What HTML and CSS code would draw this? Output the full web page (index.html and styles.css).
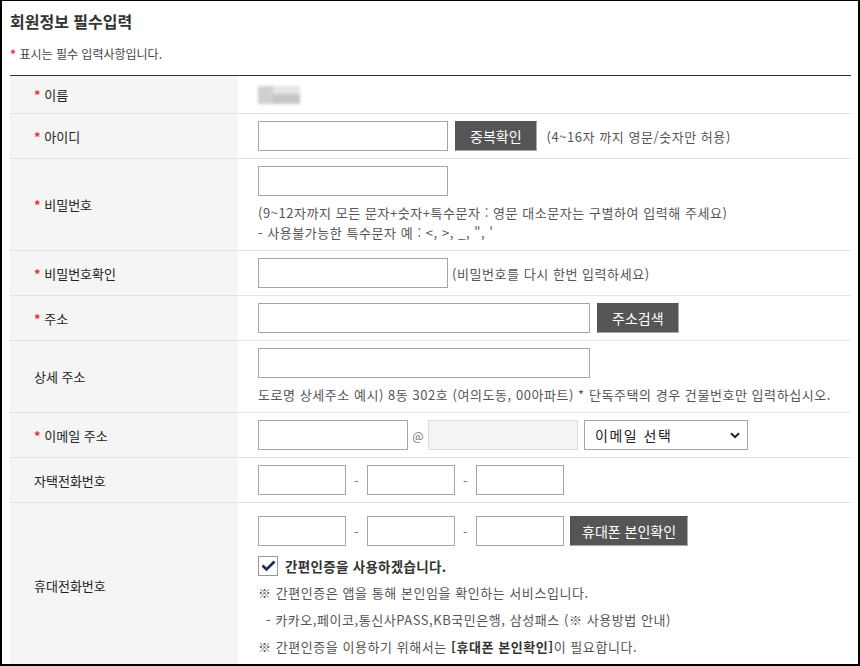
FILE: index.html
```html
<!DOCTYPE html>
<html lang="ko">
<head>
    <meta charset="UTF-8">
    <meta name="viewport" content="width=device-width, initial-scale=1.0">
    <title>회원정보 필수입력</title>
    <link rel="stylesheet" href="styles.css">
</head>
<body>
    <div class="frame">
        <h2 class="titulo">회원정보 필수입력</h2>
        <p class="aviso"><span class="req">*</span> 표시는 필수 입력사항입니다.</p>

        <table class="tabla">
            <tr class="fila-nombre">
                <th><span class="req">*</span> 이름</th>
                <td><span class="nombre-blur"></span></td>
            </tr>
            <tr>
                <th><span class="req">*</span> 아이디</th>
                <td>
                    <div class="linea">
                        <input type="text" class="inp inp-md">
                        <button class="btn">중복확인</button>
                        <span class="ayuda">(4~16자 까지 영문/숫자만 허용)</span>
                    </div>
                </td>
            </tr>
            <tr>
                <th><span class="req">*</span> 비밀번호</th>
                <td>
                    <input type="password" class="inp inp-md">
                    <p class="nota">(9~12자까지 모든 문자+숫자+특수문자 : 영문 대소문자는 구별하여 입력해 주세요)<br>- 사용불가능한 특수문자 예 : &lt;, &gt;, _, ", '</p>
                </td>
            </tr>
            <tr>
                <th><span class="req">*</span> 비밀번호확인</th>
                <td>
                    <div class="linea">
                        <input type="password" class="inp inp-md">
                        <span class="ayuda pegada">(비밀번호를 다시 한번 입력하세요)</span>
                    </div>
                </td>
            </tr>
            <tr>
                <th><span class="req">*</span> 주소</th>
                <td>
                    <div class="linea">
                        <input type="text" class="inp inp-lg">
                        <button class="btn">주소검색</button>
                    </div>
                </td>
            </tr>
            <tr>
                <th>상세 주소</th>
                <td>
                    <input type="text" class="inp inp-lg">
                    <p class="nota">도로명 상세주소 예시) 8동 302호 (여의도동, 00아파트) * 단독주택의 경우 건물번호만 입력하십시오.</p>
                </td>
            </tr>
            <tr>
                <th><span class="req">*</span> 이메일 주소</th>
                <td>
                    <div class="linea linea-mail">
                        <input type="text" class="inp inp-mail">
                        <span class="arroba">@</span>
                        <input type="text" class="inp inp-mail inp-off" disabled>
                        <div class="select-box">
                            <select class="sel">
                                <option>이메일 선택</option>
                                <option>naver.com</option>
                                <option>gmail.com</option>
                            </select>
                            <svg class="chevron" width="10" height="7" viewBox="0 0 10 7"><path d="M1 1.2 L5 5.2 L9 1.2" fill="none" stroke="#222" stroke-width="2"/></svg>
                        </div>
                    </div>
                </td>
            </tr>
            <tr>
                <th>자택전화번호</th>
                <td>
                    <div class="linea">
                        <input type="text" class="inp inp-sm">
                        <span class="guion">-</span>
                        <input type="text" class="inp inp-sm">
                        <span class="guion">-</span>
                        <input type="text" class="inp inp-sm">
                    </div>
                </td>
            </tr>
            <tr class="fila-movil">
                <th>휴대전화번호</th>
                <td>
                    <div class="linea">
                        <input type="text" class="inp inp-sm">
                        <span class="guion">-</span>
                        <input type="text" class="inp inp-sm">
                        <span class="guion">-</span>
                        <input type="text" class="inp inp-sm">
                        <button class="btn btn-movil">휴대폰 본인확인</button>
                    </div>
                    <label class="check">
                        <span class="check-box">
                            <svg width="15" height="12" viewBox="0 0 15 12"><path d="M1.5 5.6 L5.5 9.4 L13.5 1.6" fill="none" stroke="#1d2b5e" stroke-width="2.8"/></svg>
                        </span>
                        간편인증을 사용하겠습니다.
                    </label>
                    <p class="info primera">※ 간편인증은 앱을 통해 본인임을 확인하는 서비스입니다.</p>
                    <p class="info sub">- 카카오,페이코,통신사PASS,KB국민은행, 삼성패스 (※ 사용방법 안내)</p>
                    <p class="info">※ 간편인증을 이용하기 위해서는 <b>[휴대폰 본인확인]</b>이 필요합니다.</p>
                </td>
            </tr>
        </table>
    </div>
</body>
</html>
```

FILE: styles.css
```css
*{
    margin: 0;
    padding: 0;
    box-sizing: border-box;
}
body{
    background-color: #fff;
    font-family: "Noto Sans CJK KR", "Noto Sans", sans-serif;
    color: #333;
}
.frame{
    width: 860px;
    height: 666px;
    border: 2px solid #000;
    border-top-width: 1px;
    padding: 0 7px 0 8px;
    overflow: hidden;
}
.titulo{
    font-size: 16px;
    font-weight: 700;
    line-height: 20px;
    padding-top: 10px;
    color: #333;
}
.aviso{
    font-size: 12px;
    line-height: 16px;
    margin-top: 15px;
    color: #444;
}
.req{
    color: #e8323c;
    font-weight: 700;
}
/* tabla */
.tabla{
    width: 100%;
    border-collapse: collapse;
    margin-top: 13px;
    border-top: 1px solid #333;
}
.tabla tr{
    border-bottom: 1px solid #e2e2e2;
}
.tabla th{
    width: 228px;
    background-color: #f5f5f5;
    text-align: left;
    font-weight: 400;
    font-size: 13px;
    color: #222;
    padding-left: 24px;
    vertical-align: middle;
}
.tabla td{
    padding: 7px 20px;
    font-size: 13px;
    letter-spacing: 0.55px;
    color: #555;
    vertical-align: middle;
}
.fila-nombre td{
    height: 38px;
    padding-top: 4px;
    padding-bottom: 4px;
}
.nombre-blur{
    display: block;
    width: 42px;
    height: 18px;
    background: linear-gradient(90deg, #d0d0d0 0 35%, transparent 35%),
                linear-gradient(#e6e6e6 0 45%, #c6c6c6 45% 100%);
    filter: blur(1.5px);
}
.linea{
    display: flex;
    align-items: center;
}
.inp{
    height: 30px;
    border: 1px solid #a6a6a6;
    background-color: #fff;
    padding: 0 6px;
    font-size: 13px;
}
.inp-sm{
    width: 88px;
}
.inp-md{
    width: 190px;
}
.inp-lg{
    width: 332px;
}
.inp-mail{
    width: 150px;
}
.inp-off{
    background-color: #f4f4f4;
    border-color: #dcdcdc;
}
.btn{
    height: 30px;
    padding: 0 14px;
    margin-left: 7px;
    background-color: #555;
    color: #fff;
    border: 1px solid #555;
    border-right-color: #aaa;
    border-bottom-color: #aaa;
    font-family: inherit;
    font-size: 14px;
    letter-spacing: 0;
}
.btn-movil{
    margin-left: 6px;
    padding: 0 11px;
}
.ayuda{
    margin-left: 10px;
}
.ayuda.pegada{
    margin-left: 4px;
}
.nota{
    margin-top: 7px;
    line-height: 20px;
}
.arroba{
    width: 20px;
    text-align: center;
    font-size: 12px;
    letter-spacing: 0;
    color: #777;
}
.select-box{
    position: relative;
    margin-left: 6px;
}
.sel{
    appearance: none;
    width: 164px;
    height: 30px;
    border: 1px solid #a6a6a6;
    background-color: #fff;
    padding: 0 10px;
    font-family: inherit;
    font-size: 14px;
    letter-spacing: 1.5px;
    color: #222;
}
.chevron{
    position: absolute;
    right: 8px;
    top: 12px;
    pointer-events: none;
}
.guion{
    width: 21px;
    text-align: center;
    color: #777;
}
.fila-movil td{
    padding-top: 13px;
    padding-bottom: 8px;
}
.check{
    display: flex;
    align-items: center;
    margin-top: 10px;
    font-size: 13.5px;
    font-weight: 700;
    letter-spacing: 0.3px;
    color: #333;
}
.check-box{
    width: 20px;
    height: 20px;
    border: 1px solid #999;
    background-color: #fff;
    display: flex;
    justify-content: center;
    align-items: center;
    margin-right: 7px;
}
.info{
    line-height: 27px;
}
.info.primera{
    margin-top: 3px;
}
.info.sub{
    padding-left: 8px;
}
.info b{
    color: #333;
}
```
